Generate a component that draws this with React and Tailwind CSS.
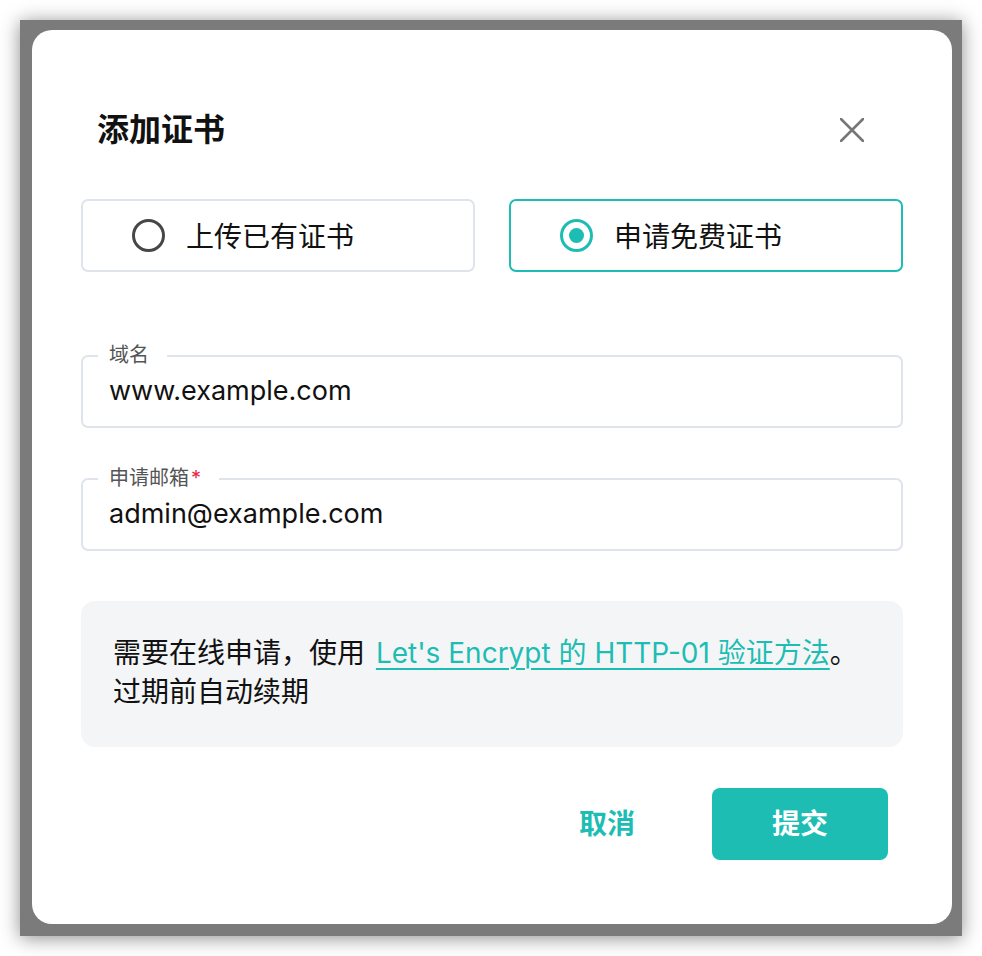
import { useState } from "react";

const font = { fontFamily: '"Inter", "Noto Sans CJK SC", sans-serif' };

function Radio({ checked }) {
  return (
    <span
      className={
        "flex items-center justify-center w-[33px] h-[33px] rounded-full border-[3px] " +
        (checked ? "border-[#1dbdb4]" : "border-[#474747]")
      }
    >
      {checked && <span className="w-[15px] h-[15px] rounded-full bg-[#1dbdb4]" />}
    </span>
  );
}

function Field({ label, required, value }) {
  return (
    <div className="relative h-[73px] rounded-[7px] border-2 border-[#dfe3eb] flex items-center px-[26px]">
      <span className="absolute left-[15px] top-[-15px] bg-white pl-[11px] pr-[18px] text-[20px] leading-[26px] text-[#555]">
        {label}
        {required && <span className="text-[#e8264a] ml-[2px]">*</span>}
      </span>
      <span className="text-[27px] text-[#111]">{value}</span>
    </div>
  );
}

export default function App() {
  const [mode, setMode] = useState("free");

  return (
    <div className="min-h-screen bg-white p-[20px]" style={font}>
      <div className="w-[942px] h-[916px] bg-[#7b7b7b] shadow-[0_2px_18px_rgba(0,0,0,0.45)] pt-[10px] pl-[12px]">
        <div className="w-[920px] h-[894px] bg-white rounded-[20px] pt-[78px] px-[49px] pb-[65px]">
          <div className="flex items-center justify-between h-[44px]">
            <h2 className="pl-[16px] text-[32px] font-bold text-[#111]">添加证书</h2>
            <button className="w-[44px] h-[44px] mr-[29px] flex items-center justify-center">
              <svg width="24" height="24" viewBox="0 0 24 24">
                <path d="M1 1L23 23M23 1L1 23" stroke="#777" strokeWidth="2.6" strokeLinecap="round" />
              </svg>
            </button>
          </div>

          <div className="grid grid-cols-2 gap-[34px] mt-[47px]">
            <button
              onClick={() => setMode("upload")}
              className={
                "h-[73px] rounded-[7px] border-2 flex items-center pl-[49px] gap-[21px] " +
                (mode === "upload" ? "border-[#1dbdb4]" : "border-[#dfe3eb]")
              }
            >
              <Radio checked={mode === "upload"} />
              <span className="text-[28px] leading-[36px] pt-[3px] text-[#111]">上传已有证书</span>
            </button>
            <button
              onClick={() => setMode("free")}
              className={
                "h-[73px] rounded-[7px] border-2 flex items-center pl-[49px] gap-[21px] " +
                (mode === "free" ? "border-[#1dbdb4]" : "border-[#dfe3eb]")
              }
            >
              <Radio checked={mode === "free"} />
              <span className="text-[28px] leading-[36px] pt-[3px] text-[#111]">申请免费证书</span>
            </button>
          </div>

          <div className="mt-[83px]">
            <Field label="域名" value="www.example.com" />
          </div>
          <div className="mt-[50px]">
            <Field label="申请邮箱" required value="admin@example.com" />
          </div>

          <div className="mt-[50px] h-[146px] rounded-[14px] bg-[#f4f5f7] px-[32px] pt-[33px] text-[28px] leading-[39px] text-[#111]">
            需要在线申请，使用{" "}
            <a href="#" className="ml-[3px] text-[#1dbdb4] underline underline-offset-[5px] decoration-[2px]">
              Let's Encrypt 的 HTTP-01 验证方法
            </a>
            。
            <br />
            过期前自动续期
          </div>

          <div className="mt-[41px] flex justify-end items-center pr-[15px]">
            <button className="w-[120px] h-[72px] text-[28px] font-bold text-[#1dbdb4]">取消</button>
            <button className="ml-[45px] w-[176px] h-[72px] rounded-[8px] bg-[#1dbdb4] text-[28px] font-bold text-white">
              提交
            </button>
          </div>
        </div>
      </div>
    </div>
  );
}
